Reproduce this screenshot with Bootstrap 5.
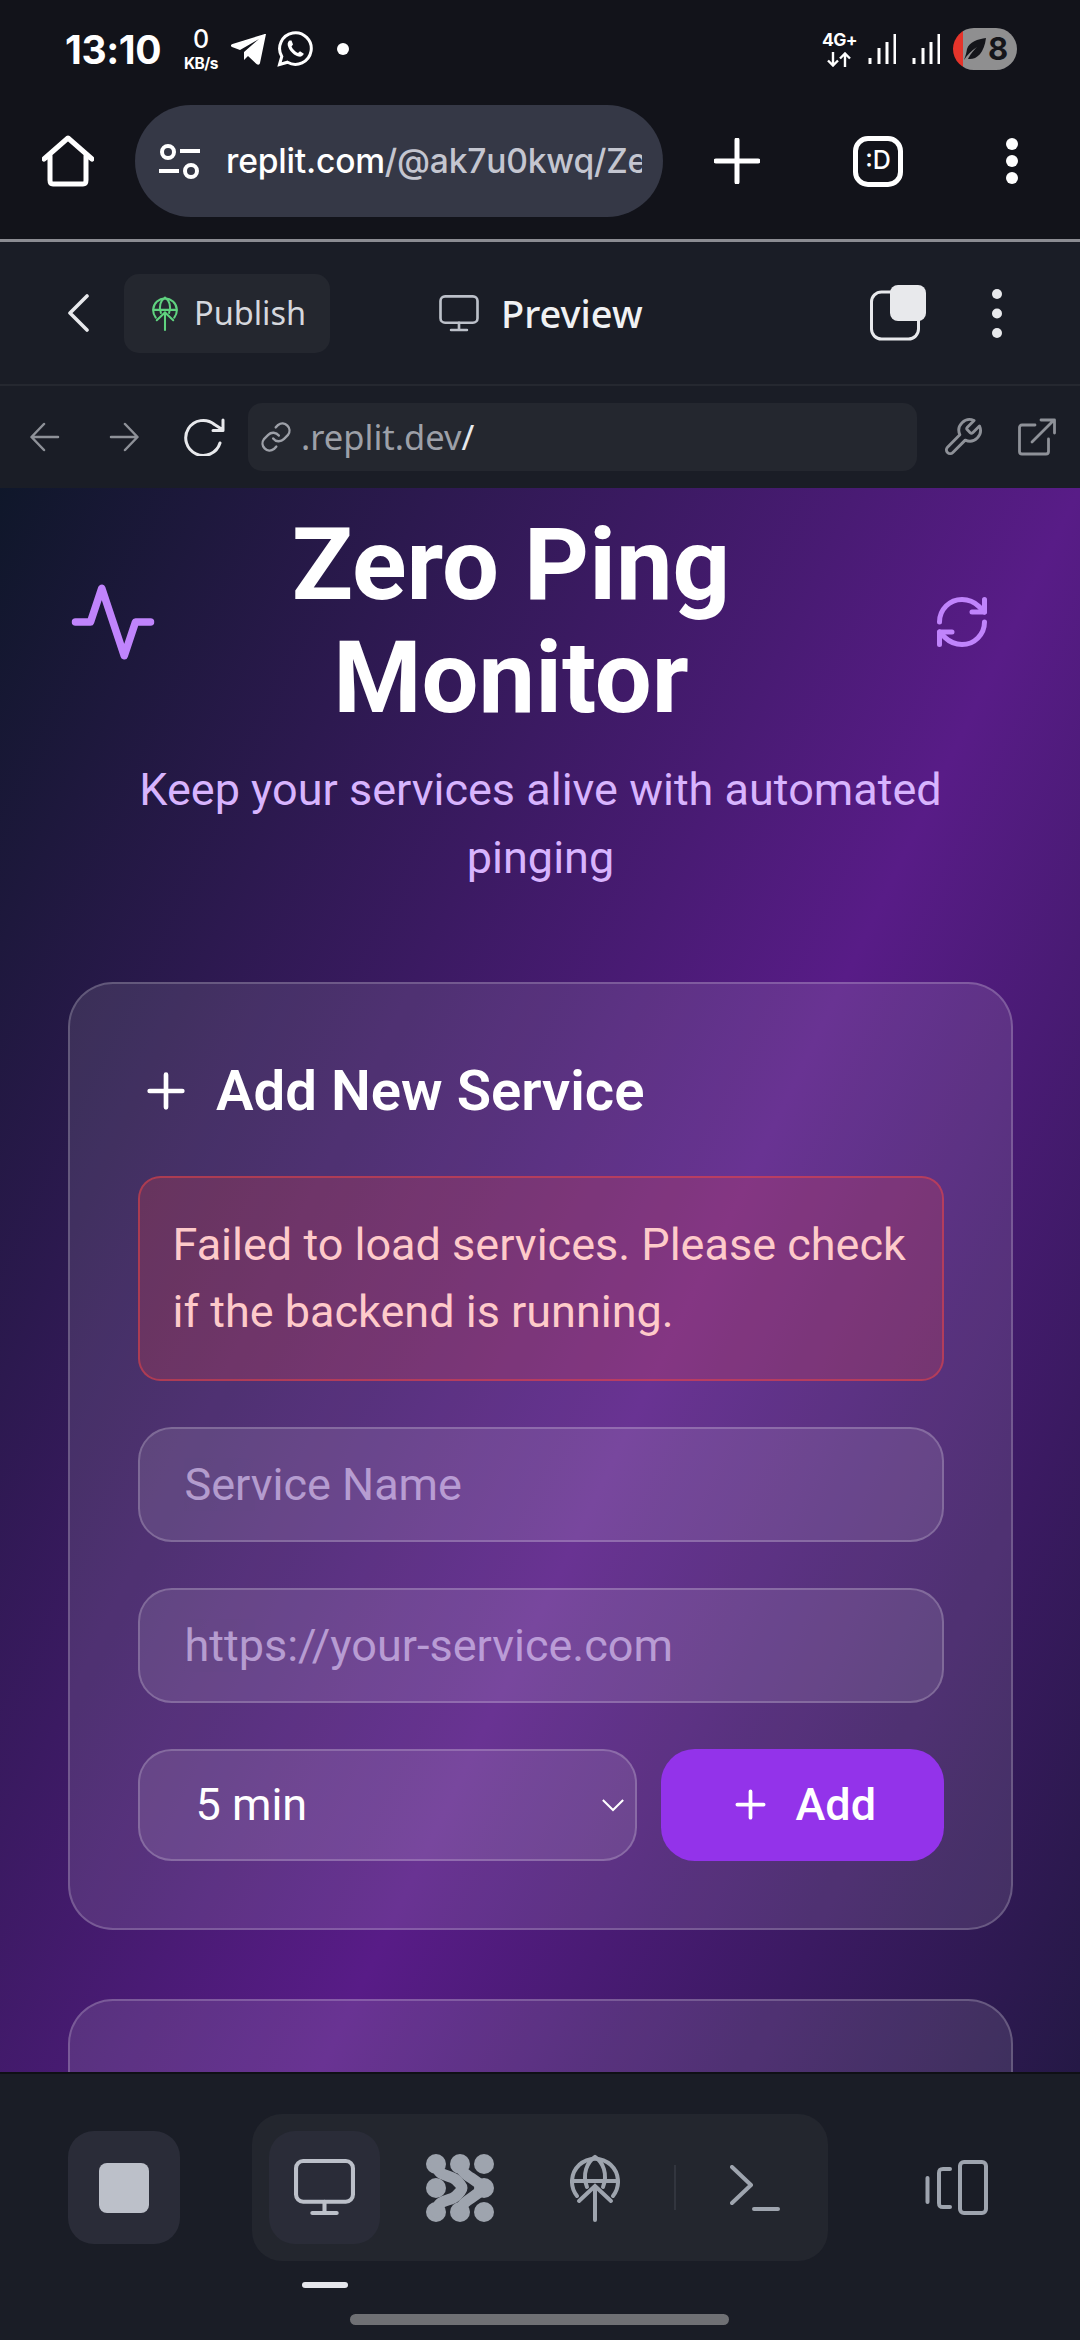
<!DOCTYPE html>
<html lang="en">
<head>
    <meta charset="UTF-8">
    <meta name="viewport" content="width=device-width, initial-scale=1.0">
    <title>Zero Ping Monitor - Replit</title>
    <link href="https://cdn.jsdelivr.net/npm/bootstrap@5.3.0/dist/css/bootstrap.min.css" rel="stylesheet">
    <style>
        html, body { height: 2340px; overflow: hidden; }
        body { background: #1a1d26; font-family: "Roboto", sans-serif; }
        svg { display: block; flex-shrink: 0; }

        /* phone chrome */
        .status-row { height: 98px; background: #12131a; color: #fff; font-family: "Inter", sans-serif; padding: 0 63px 0 65px; }
        .clock { font-size: 39px; font-weight: 700; width: 116px; line-height: 1; letter-spacing: -.4px; }
        .netspeed { width: 40px; margin-right: 10px; text-align: center; font-weight: 600; line-height: 1; }
        .netspeed b { display: block; font-size: 25px; font-weight: 500; }
        .netspeed i { display: block; font-size: 15.5px; font-style: normal; font-weight: 700; margin-top: 4px; letter-spacing: -.5px; white-space: nowrap; }
        .wa-icon { margin-left: 11px; }
        .note-dot { width: 12px; height: 12px; border-radius: 50%; background: #fff; margin-left: 24px; }
        .net-type { width: 33px; margin-right: 13px; font-size: 17.5px; font-weight: 700; line-height: 1; text-align: center; white-space: nowrap; letter-spacing: -.6px; }
        .net-arrows { margin: 3px auto 0; }
        .battery { width: 64px; height: 42px; border-radius: 21px; margin-left: 13px; background: linear-gradient(90deg, #e5342b 10px, #8f8f90 10px); color: #14151a; font-size: 31px; font-weight: 700; padding-left: 10px; gap: 1px; }

        .omni-row { height: 141px; background: #12131a; padding: 0 0 15px 42px; }
        .omni-pill { width: 528px; height: 112px; border-radius: 56px; background: #353846; margin-left: 41px; padding-left: 24px; }
        .omni-url { width: 416px; margin-left: 26px; overflow: hidden; white-space: nowrap; font-family: "Inter", sans-serif; font-size: 33.6px; font-weight: 500; color: #c4c6d0; letter-spacing: -.2px; }
        .omni-url span { color: #fff; }
        .omni-plus { margin-left: 51px; }
        .tab-count { width: 50px; height: 51px; border: 5px solid #fff; border-radius: 15px; margin-left: 93px; color: #fff; font-family: "Inter", sans-serif; font-size: 25px; font-weight: 500; }
        .omni-dots { margin-left: 103px; }
        .omni-rule { height: 3px; background: #8b8c92; }

        /* replit bars */
        .repl-row { height: 144px; background: #1a1d26; padding-left: 68px; border-bottom: 2px solid #252830; font-family: "Noto Sans", sans-serif; }
        .publish-btn { width: 206px; height: 79px; border-radius: 15px; background: #24272f; margin-left: 35px; padding-left: 28px; gap: 16px; color: #d5d7dd; font-size: 32.5px; }
        .publish-icon { color: #5fd27f; }
        .preview-tab { margin-left: 109px; gap: 22px; color: #f0f1f3; font-size: 38px; font-weight: 500; }
        .preview-icon { color: #bcc0c9; }
        .layers-icon { margin-left: 227px; }
        .repl-dots { margin-left: 66px; }
        .addr-row { height: 102px; background: #1a1d26; padding-left: 30px; }
        .addr-forward { margin-left: 49px; }
        .addr-reload { margin-left: 45px; }
        .addr-box { width: 669px; height: 68px; border-radius: 14px; background: #24272f; margin-left: 23px; padding-left: 11px; gap: 8px; color: #9da0a8; font-family: "Noto Sans", sans-serif; font-size: 34.5px; }
        .addr-box span { color: #e8e9ec; }
        .addr-wrench { margin-left: 24px; }
        .addr-open { margin-left: 34px; }

        /* app */
        .app-view { height: 1584px; overflow: hidden; }
        .app-bg { height: 2250px; padding: 21px 67px 0 68px; background: linear-gradient(to bottom right, #0f172a, #581c87, #0f172a); }
        .title-main { flex: 1; margin: 0; font-size: 101px; line-height: 112.5px; font-weight: 700; color: #fff; text-align: center; }
        .refresh-wrap { padding: 0 21px 0 68px; }
        .subtitle { margin: 22px 0 90px; padding: 0 50px; font-size: 45px; line-height: 68px; color: #d8b4fe; text-align: center; }
        .glass-card { background: rgba(255,255,255,.1); border: 2.8px solid rgba(255,255,255,.2); border-radius: 45px; color: #fff; }
        .glass-body { padding: 67.5px; }
        .glass-card + .glass-card { margin-top: 69px; height: 400px; }
        .card-head { height: 79px; margin-bottom: 45px; gap: 22.5px; font-size: 56.3px; font-weight: 600; }
        .error-box { margin-bottom: 46px; padding: 33px; background: rgba(239,68,68,.2); border: 2.8px solid rgba(239,68,68,.5); border-radius: 22.5px; color: #fecaca; font-size: 45px; line-height: 67.5px; }
        .glass-input.form-control { height: 115px; margin-bottom: 46px; padding: 0 45px; background: rgba(255,255,255,.1); border: 2.8px solid rgba(255,255,255,.2); border-radius: 33.75px; color: #fff; font-size: 45px; }
        .glass-input.form-control::placeholder { color: #e9d5ff; opacity: .6; }
        .glass-select.form-select { flex: 1; height: 112px; padding: 0 45px 0 56px; background-color: rgba(255,255,255,.1); background-size: 24px 14px; background-position: right 10px center; background-image: url("data:image/svg+xml,%3Csvg xmlns='http://www.w3.org/2000/svg' viewBox='0 0 26 15'%3E%3Cpath d='M2 2l11 11L24 2' fill='none' stroke='%23fff' stroke-width='2.2'/%3E%3C/svg%3E"); border: 2.8px solid rgba(255,255,255,.2); border-radius: 33.75px; color: #fff; font-size: 45px; }
        .add-btn.btn { width: 283px; height: 112px; gap: 22.5px; background: #9333ea; border: 0; border-radius: 33.75px; color: #fff; font-size: 45px; font-weight: 500; }

        /* bottom toolbar */
        .tool-row { height: 269px; background: #1a1d26; border-top: 2px solid #0f1015; padding: 40px 0 0 68px; }
        .stop-btn { width: 112px; height: 113px; border-radius: 26px; background: #2a2c38; margin-top: 17px; }
        .stop-btn div { width: 50px; height: 50px; border-radius: 8px; background: #bcc0c9; }
        .tool-group { width: 576px; height: 147px; margin-left: 72px; padding-left: 17px; border-radius: 30px; background: #23262e; color: #9ea4ae; }
        .tool-active { width: 111px; height: 113px; border-radius: 26px; background: #2a2c38; color: #bcc0c9; }
        .tool-agent { margin-left: 46px; }
        .tool-globe { margin-left: 76px; }
        .tool-sep { width: 2px; height: 45px; background: #32353e; margin: 0 54px; }
        .tool-panels { margin: 46px 0 0 97px; }
        .tab-mark { width: 46px; height: 6px; margin: 21px 0 0 234px; border-radius: 3px; background: #e6e7ec; }
        .home-bar { width: 379px; height: 11px; margin: 26px 0 0 282px; border-radius: 6px; background: #6f7074; }
    </style>
</head>
<body>
    <svg width="0" height="0" class="position-absolute">
        <symbol id="ico-globe" viewBox="0 0 50 68">
            <g fill="none" stroke="currentColor" stroke-width="4" stroke-linecap="round">
                <path d="M7 42A23 23 0 1 1 43 42"/>
                <path d="M3 27H47"/>
                <path d="M17 33C12 20 17 8 25 3C33 8 38 20 33 33"/>
                <path d="M9 47L25 32L41 47M25 33V66"/>
            </g>
        </symbol>
        <symbol id="ico-monitor" viewBox="0 0 60 56">
            <g fill="none" stroke="currentColor" stroke-width="4" stroke-linecap="round">
                <rect x="2" y="2" width="56" height="40" rx="7"/>
                <path d="M30 42V53M18 53H42"/>
            </g>
        </symbol>
    </svg>

    <!-- Android status bar -->
    <div class="status-row d-flex align-items-center">
        <div class="clock">13:10</div>
        <div class="netspeed"><b>0</b><i>KB/s</i></div>
        <svg width="35" height="31" viewBox="0 0 35 31"><path d="M35 0L29 29C28.5 31 27 31 25.5 30L17 22L13 26L13 18L28 5L9 16L1 13C-1 12 -.5 11 1.5 10L33 .2C34.5 -.3 35 0 35 0Z" fill="#fff"/></svg>
        <svg class="wa-icon" width="36" height="36" viewBox="0 0 36 36"><path d="M2.5 33.5L4.8 25.5A15.8 15.8 0 1 1 10.5 31.2Z" fill="none" stroke="#fff" stroke-width="3"/><path d="M12.5 9.5C10.5 11 10 13.5 11.5 16.5C13.5 21 17.5 24.5 21.5 25.5C24 26 26 25 26.8 22.8L23 20.3L21 22C18.5 21 15.500 18 14.5 15.5L16 13.5L14.5 9.5Z" fill="#fff"/></svg>
        <div class="note-dot"></div>
        <div class="net-type ms-auto">4G+<svg class="net-arrows" width="26" height="15" viewBox="0 0 26 15"><path d="M7 0V13M2 8.5L7 13.5L12 8.5M19 15V2M14 6.5L19 1.5L24 6.5" fill="none" stroke="#fff" stroke-width="2.4"/></svg></div>
        <svg width="28" height="30" viewBox="0 0 28 30"><path d="M2 24V30M11 14V30M19 8V30M27 0V30" stroke="#fff" stroke-width="3"/></svg>
        <svg class="ms-3" width="28" height="30" viewBox="0 0 28 30"><path d="M2 24V30M11 14V30M19 8V30M27 0V30" stroke="#fff" stroke-width="3"/></svg>
        <div class="battery d-flex align-items-center">
            <svg width="24" height="24" viewBox="0 0 24 24"><path d="M1 23C4 18 8 14 14 10C9 15 7 18 5 22C13 23 21 17 23 1C15 2 6 5 4 12C3.5 15 3 18 1 23Z" fill="#14151a"/></svg>8
        </div>
    </div>

    <!-- browser toolbar -->
    <div class="omni-row d-flex align-items-center">
        <svg width="52" height="52" viewBox="0 0 52 52"><path d="M2 24L26 3L50 24M8 20V45C8 48 9 49 11 49H41C43 49 44 48 44 45V20" fill="none" stroke="#fff" stroke-width="5" stroke-linecap="round" stroke-linejoin="round"/></svg>
        <div class="omni-pill d-flex align-items-center">
            <svg width="41" height="35" viewBox="0 0 41 35"><g fill="none" stroke="#fff" stroke-width="4"><circle cx="9" cy="8" r="6"/><circle cx="32" cy="27" r="6"/><path d="M21 7H41M0 27H20"/></g></svg>
            <div class="omni-url"><span>replit.com</span>/@ak7u0kwq/Ze</div>
        </div>
        <svg class="omni-plus" width="46" height="46" viewBox="0 0 46 46"><path d="M23 2V44M2 23H44" stroke="#fff" stroke-width="5" stroke-linecap="round"/></svg>
        <div class="tab-count d-flex align-items-center justify-content-center">:D</div>
        <svg class="omni-dots" width="12" height="46" viewBox="0 0 12 46"><circle cx="6" cy="6" r="6" fill="#fff"/><circle cx="6" cy="23" r="6" fill="#fff"/><circle cx="6" cy="40" r="6" fill="#fff"/></svg>
    </div>
    <div class="omni-rule"></div>

    <!-- replit header -->
    <div class="repl-row d-flex align-items-center">
        <svg width="21" height="38" viewBox="0 0 21 38"><path d="M19 2L2 19L19 36" fill="none" stroke="#e8e9ec" stroke-width="3.6" stroke-linecap="round" stroke-linejoin="round"/></svg>
        <div class="publish-btn d-flex align-items-center">
            <svg class="publish-icon" width="26" height="35"><use href="#ico-globe"/></svg>Publish
        </div>
        <div class="preview-tab d-flex align-items-center">
            <svg class="preview-icon" width="40" height="37"><use href="#ico-monitor"/></svg>Preview
        </div>
        <svg class="layers-icon" width="56" height="56" viewBox="0 0 56 56"><rect x="1.5" y="7" width="47" height="47" rx="10" fill="none" stroke="#e8e9ec" stroke-width="3"/><rect x="20" y="0" width="36" height="36" rx="8" fill="#e8e9ec"/></svg>
        <svg class="repl-dots" width="10" height="49" viewBox="0 0 10 49"><circle cx="5" cy="5" r="5" fill="#e8e9ec"/><circle cx="5" cy="24.5" r="5" fill="#e8e9ec"/><circle cx="5" cy="44" r="5" fill="#e8e9ec"/></svg>
    </div>
    <div class="addr-row d-flex align-items-center">
        <svg width="30" height="30" viewBox="0 0 30 30"><path d="M28 15H2M14 2L1.5 15L14 28" fill="none" stroke="#8e9198" stroke-width="2.5" stroke-linecap="round" stroke-linejoin="round"/></svg>
        <svg class="addr-forward" width="30" height="30" viewBox="0 0 30 30"><path d="M2 15H28M16 2L28.5 15L16 28" fill="none" stroke="#8e9198" stroke-width="2.5" stroke-linecap="round" stroke-linejoin="round"/></svg>
        <svg class="addr-reload" width="41" height="38" viewBox="0 0 41 38"><path d="M36 25A17.5 17.5 0 1 1 30.5 6.5L39 12M39 2V12.5H29" fill="none" stroke="#e8e9ec" stroke-width="3" stroke-linecap="round" stroke-linejoin="round"/></svg>
        <div class="addr-box d-flex align-items-center">
            <svg width="34" height="34" viewBox="0 0 24 24"><g fill="none" stroke="#9da0a8" stroke-width="1.7" stroke-linecap="round" stroke-linejoin="round"><path d="M10 13a5 5 0 0 0 7.5.5l3-3a5 5 0 0 0-7-7l-1.7 1.7"/><path d="M14 11a5 5 0 0 0-7.5-.5l-3 3a5 5 0 0 0 7 7l1.7-1.7"/></g></svg>
            <div>.replit.dev<span>/</span></div>
        </div>
        <svg class="addr-wrench" width="43" height="43" viewBox="0 0 24 24"><path d="M14.7 6.3a1 1 0 0 0 0 1.4l1.6 1.6a1 1 0 0 0 1.4 0l3.77-3.77a6 6 0 0 1-7.94 7.94l-6.91 6.91a2.12 2.12 0 0 1-3-3l6.91-6.91a6 6 0 0 1 7.94-7.94l-3.76 3.76z" fill="none" stroke="#8e9198" stroke-width="1.6" stroke-linejoin="round"/></svg>
        <svg class="addr-open" width="38" height="38" viewBox="0 0 38 38"><path d="M17 7H4C2.5 7 1.5 8 1.5 9.5V33.5C1.5 35 2.500 36 4 36H28C29.5 36 30.5 35 30.5 33.5V21M14 24L36 2M23 2H36.5V15" fill="none" stroke="#8e9198" stroke-width="2.8" stroke-linecap="round" stroke-linejoin="round"/></svg>
    </div>

    <!-- app preview -->
    <div class="app-view">
        <div class="app-bg">
            <div class="d-flex align-items-center">
                <svg width="90" height="90" viewBox="0 0 24 24"><polyline points="22 12 18 12 15 21 9 3 6 12 2 12" fill="none" stroke="#c084fc" stroke-width="2" stroke-linecap="round" stroke-linejoin="round"/></svg>
                <h1 class="title-main">Zero Ping Monitor</h1>
                <div class="refresh-wrap">
                    <svg width="60" height="60" viewBox="0 0 24 24"><g fill="none" stroke="#c084fc" stroke-width="2" stroke-linecap="round" stroke-linejoin="round"><path d="M3 12a9 9 0 0 1 9-9 9.75 9.75 0 0 1 6.74 2.74L21 8"/><path d="M21 3v5h-5"/><path d="M21 12a9 9 0 0 1-9 9 9.75 9.75 0 0 1-6.74-2.74L3 16"/><path d="M8 16H3v5"/></g></svg>
                </div>
            </div>
            <p class="subtitle">Keep your services alive with automated pinging</p>

            <div class="card glass-card">
                <div class="glass-body">
                    <div class="card-head d-flex align-items-center">
                        <svg width="56" height="56" viewBox="0 0 24 24"><path d="M5 12h14M12 5v14" fill="none" stroke="#fff" stroke-width="2" stroke-linecap="round"/></svg>
                        Add New Service
                    </div>
                    <div class="error-box">Failed to load services. Please check if the backend is running.</div>
                    <input type="text" class="form-control glass-input" placeholder="Service Name">
                    <input type="text" class="form-control glass-input" placeholder="https://your-service.com">
                    <div class="d-flex gap-4">
                        <select class="form-select glass-select"><option>5 min</option></select>
                        <button class="btn add-btn d-flex align-items-center justify-content-center">
                            <svg width="45" height="45" viewBox="0 0 24 24"><path d="M5 12h14M12 5v14" fill="none" stroke="#fff" stroke-width="2" stroke-linecap="round"/></svg>
                            Add
                        </button>
                    </div>
                </div>
            </div>
            <div class="card glass-card"></div>
        </div>
    </div>

    <!-- bottom toolbar -->
    <div class="tool-row">
        <div class="d-flex align-items-start">
            <div class="stop-btn d-flex align-items-center justify-content-center"><div></div></div>
            <div class="tool-group d-flex align-items-center">
                <div class="tool-active d-flex align-items-center justify-content-center">
                    <svg width="61" height="57"><use href="#ico-monitor"/></svg>
                </div>
                <svg class="tool-agent" width="68" height="68" viewBox="0 0 68 68">
                    <g fill="#9ea4ae"><circle cx="10" cy="10" r="10"/><circle cx="34" cy="10" r="10"/><circle cx="58" cy="10" r="10"/><circle cx="10" cy="34" r="10"/><circle cx="58" cy="34" r="10"/><circle cx="10" cy="58" r="10"/><circle cx="34" cy="58" r="10"/><circle cx="58" cy="58" r="10"/></g>
                    <g fill="none" stroke="#9ea4ae" stroke-width="11" stroke-linecap="round"><path d="M10 10C12 24 24 20 30 26C34 30 36 32 36 34C36 36 34 38 30 42C24 48 12 44 10 58"/><path d="M34 10C36 22 46 22 58 34C46 46 36 46 34 58"/></g>
                </svg>
                <svg class="tool-globe" width="50" height="68"><use href="#ico-globe"/></svg>
                <div class="tool-sep"></div>
                <svg width="50" height="46" viewBox="0 0 50 46"><path d="M2 2L21 20L2 38M24 44H48" fill="none" stroke="#9ea4ae" stroke-width="4" stroke-linecap="round" stroke-linejoin="round"/></svg>
            </div>
            <svg class="tool-panels" width="63" height="55" viewBox="0 0 63 55"><g fill="none" stroke="#9ea4ae" stroke-width="4" stroke-linecap="round" stroke-linejoin="round"><path d="M2.5 18V42"/><path d="M25 9H18C15 9 14 10 14 13V43C14 46 15 47 18 47H25"/><rect x="35" y="2" width="26" height="51" rx="4"/></g></svg>
        </div>
        <div class="tab-mark"></div>
        <div class="home-bar"></div>
    </div>

    <script src="https://cdn.jsdelivr.net/npm/bootstrap@5.3.0/dist/js/bootstrap.bundle.min.js"></script>
</body>
</html>
